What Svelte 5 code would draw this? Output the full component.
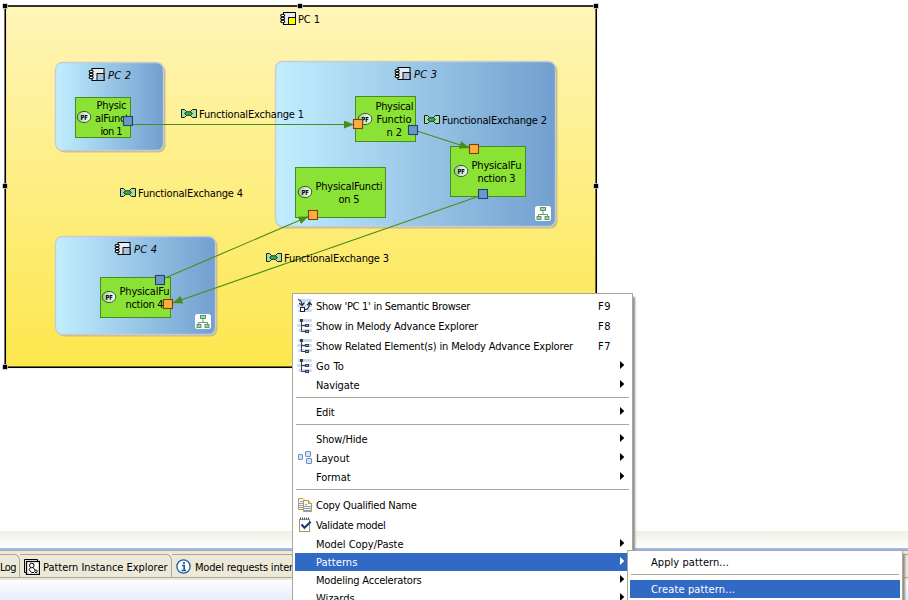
<script>
  const containers = [
    { name: 'PC 2', x: 55.5, y: 62.5, w: 108, h: 88, ix: 88.5, tx: 108, ty: 79, grad: 'gBlue' },
    { name: 'PC 3', x: 275.5, y: 61.5, w: 280, h: 165, ix: 394.5, tx: 414, ty: 78, grad: 'gBlue', sub: [535, 206] },
    { name: 'PC 4', x: 55.5, y: 236.5, w: 160, h: 98, ix: 114.5, tx: 134, ty: 253, grad: 'gBlue', sub: [195, 314] }
  ];
  const functions = [
    { x: 75.5, y: 97.5, w: 55, h: 40, px: 84, py: 117, lines: [['Physic', 96.5, 109, 30], ['alFunct', 95, 122, 34], ['ion 1', 100.5, 135, 22]] },
    { x: 355.5, y: 96.5, w: 60, h: 45, px: 365, py: 119, lines: [['Physical', 375.5, 110, 38], ['Functio', 376.5, 123, 35], ['n 2', 386.5, 136, 15.5]] },
    { x: 450.5, y: 146.5, w: 75, h: 50, px: 461, py: 171, lines: [['PhysicalFu', 471.5, 169, 50], ['nction 3', 477.5, 182, 38]] },
    { x: 295.5, y: 167.5, w: 90, h: 50, px: 305, py: 192, lines: [['PhysicalFuncti', 315.5, 190, 67], ['on 5', 338.5, 203, 21]] },
    { x: 100.5, y: 277.5, w: 70, h: 40, px: 109, py: 297, lines: [['PhysicalFu', 119.5, 295, 50], ['nction 4', 125.5, 308, 38]] }
  ];
  const blue = '#6b98cc';
  const orange = '#fcaf3e';
  const ports = [
    [123, 116, blue], [353, 119, orange], [408, 125, blue], [469, 144, orange],
    [478, 189, blue], [308, 210, orange], [155, 275, blue], [163, 299, orange]
  ];
  const edges = [
    [132, 124.5, 354, 124.5], [417, 131, 469.5, 148], [165, 278, 308.5, 216.5], [478, 196.5, 172.5, 303]
  ];
  const exchanges = [
    ['FunctionalExchange 1', 181, 108, 199, 118],
    ['FunctionalExchange 2', 424, 114, 442, 124],
    ['FunctionalExchange 3', 266, 252, 284, 262],
    ['FunctionalExchange 4', 120, 187, 138, 197]
  ];
  const handles = [[3, 4], [298, 4], [594, 4], [3, 184], [594, 184], [3, 365]];

  const menu = [
    { t: "Show 'PC 1' in Semantic Browser", w: 154, key: 'F9', icon: 'semantic' },
    { t: 'Show in Melody Advance Explorer', w: 162, key: 'F8', icon: 'tree' },
    { t: 'Show Related Element(s) in Melody Advance Explorer', w: 257, key: 'F7', icon: 'tree' },
    { t: 'Go To', w: 28, sub: true, icon: 'tree' },
    { t: 'Navigate', w: 43.5, sub: true },
    null,
    { t: 'Edit', w: 18.5, sub: true },
    null,
    { t: 'Show/Hide', w: 51.5, sub: true },
    { t: 'Layout', w: 33.5, sub: true, icon: 'layout' },
    { t: 'Format', w: 34.5, sub: true },
    null,
    { t: 'Copy Qualified Name', w: 100.5, icon: 'copy' },
    { t: 'Validate model', w: 69.5, icon: 'validate' },
    { t: 'Model Copy/Paste', w: 87.5, sub: true },
    { t: 'Patterns', w: 41.5, sub: true, active: true },
    { t: 'Modeling Accelerators', w: 105.5, sub: true },
    { t: 'Wizards', w: 38.5, sub: true }
  ];
  const submenu = [{ t: 'Apply pattern...', w: 78 }, null, { t: 'Create pattern...', w: 84, active: true }];

  // Spreads the glyphs of a label over a given width.
  function fit(node, width) {
    const natural = node.getBoundingClientRect().width;
    node.style.letterSpacing = `${(width - natural) / node.textContent.length}px`;
  }
</script>

{#snippet componentIcon(x, y, fill)}
  <g transform="translate({x} {y})">
    <rect x="3.5" y=".5" width="12" height="12" fill="#e6ebf3" stroke="#000" />
    <rect x="8.5" y="5.5" width="7" height="7" {fill} stroke="#111" />
    <g fill="#fff" stroke="#000" stroke-width="1.1">
      <ellipse cx="2.7" cy="3.5" rx="2" ry="1.2" />
      <ellipse cx="2.7" cy="6.5" rx="2" ry="1.2" />
      <ellipse cx="2.7" cy="9.5" rx="2" ry="1.2" />
    </g>
  </g>
{/snippet}

{#snippet arrow()}
  <svg class="arrow" width="5" height="8" viewBox="0 0 5 8"><path d="M0 0L4.3 4L0 8Z" fill="currentColor" /></svg>
{/snippet}

{#snippet menuIcon(kind)}
  <svg width="16" height="16" viewBox="0 0 16 16">
    {#if kind === 'tree' || kind === 'semantic'}
      <g fill="#c9daf3">
        <rect x="1" y="1" width="14" height="3" rx="1.5" />
        <rect x="0" y="6" width="15" height="3" rx="1.5" />
        <rect x="1" y="11" width="14" height="3" rx="1.5" />
      </g>
    {/if}
    {#if kind === 'tree'}
      <path d="M4.5 3V13.5H10M4.5 7.5H10" fill="none" stroke="#3c3f48" />
      <g fill="#3c3f48">
        <rect x="3" y="1" width="3" height="3" />
        <rect x="8" y="6" width="4" height="3" />
        <rect x="8" y="12" width="4" height="3" />
      </g>
      <rect x="9" y="7" width="2" height="1" fill="#8fa3c6" /><rect x="9" y="13" width="2" height="1" fill="#8fa3c6" />
    {:else if kind === 'semantic'}
      <path d="M1 1.500C4 2 5 4 5 7M2.300 5L5 7.500L7.500 4.500M8 11.5C11.5 11.5 12.5 9 12.5 5M10.3 7L12.5 4.300L14.700 7" fill="none" stroke="#222a34" stroke-width="1.2" />
      <rect x="3.5" y="9.5" width="4" height="4" fill="#fff" stroke="#222" />
    {:else if kind === 'layout'}
      <g fill="#d5e5f8" stroke="#6c8fc2">
        <rect x="1.5" y="4.5" width="4" height="5" rx=".5" />
        <rect x="8.5" y="1.5" width="5" height="5" rx=".5" />
        <rect x="9.5" y="8.5" width="5" height="5" rx=".5" />
      </g>
    {:else if kind === 'copy'}
      <path d="M1.5 1.5H6L8.5 4V12.5H1.5Z" fill="#fbf7e4" stroke="#b39a55" />
      <path d="M6.500 3.500H11.500L14.500 6.500V14.500H6.500Z" fill="#fbf7e4" stroke="#b39a55" />
      <path d="M11.500 3.500V6.500H14.500" fill="#e8d48b" stroke="#b39a55" />
      <path d="M3 4.500H6M1 6.500H6M1 8.500H6M1 10.500H6M8 7.500H10M7 9.500H14M7 11.500H14M7 13.500H14" stroke="#7f9fd6" />
    {:else if kind === 'validate'}
      <rect x="2.500" y="2.500" width="10" height="12" fill="#fff" stroke="#ad955c" />
      <path d="M3 1.500H13" stroke="#2e517c" stroke-width="2" stroke-dasharray="1 1" />
      <path d="M4.500 7.500L7.500 10.700L13.700 4.800" fill="none" stroke="#173f7c" stroke-width="2.200" />
    {/if}
  </svg>
{/snippet}

<div class="window">
  <div class="canvas">
    <svg width="908" height="531" viewBox="0 0 908 531">
      <defs>
        <linearGradient id="gYellow" x1="0" y1="0" x2="0" y2="1">
          <stop offset="0" stop-color="#fff5b8" /><stop offset="1" stop-color="#fce74c" />
        </linearGradient>
        <linearGradient id="gBlue"><stop offset="0" stop-color="#c1efff" /><stop offset="1" stop-color="#729fcf" /></linearGradient>
        <linearGradient id="gGreen"><stop offset="0" stop-color="#8fca8a" /><stop offset=".7" stop-color="#e6f3e5" /><stop offset="1" stop-color="#fff" /></linearGradient>
        <marker id="tip" markerUnits="userSpaceOnUse" viewBox="0 0 10 8" refX="10" refY="4" markerWidth="10" markerHeight="8" orient="auto">
          <path d="M0 0L10 4L0 8Z" fill="#4a8c1c" />
        </marker>
      </defs>

      <rect x="5.250" y="6" width="591" height="361.250" fill="url(#gYellow)" stroke="#000" stroke-width="1.600" />
      {#each handles as [x, y]}
        <rect x={x - 0.5} y={y - 0.5} width="5" height="5" fill="#000" stroke="#fff" stroke-width=".6" />
      {/each}
      {@render componentIcon(280, 12, '#ffff00')}
      <text x="298" y="23" textLength="22">PC 1</text>

      {#each containers as c}
        <rect x={c.x + 2} y={c.y + 2} width={c.w} height={c.h} rx="7" fill="#ccbd83" />
        <rect x={c.x} y={c.y} width={c.w} height={c.h} rx="7" fill="url(#{c.grad})" stroke="#c5ccd4" stroke-width="1.400" />
        {@render componentIcon(c.ix, c.ty - 11, '#a9c2e2')}
        <text class="italic" x={c.tx} y={c.ty} textLength="23">{c.name}</text>
        {#if c.sub}
          <g transform="translate({c.sub[0]} {c.sub[1]})">
            <rect x="0" y="0" width="16" height="15" rx="2.500" fill="#fff" />
            <path d="M8 5V8M3.500 11V8.500H12.500V11" fill="none" stroke="#6d9a76" />
            <g fill="#9fd3a5" stroke="#4f9160" stroke-width=".9">
              <rect x="5.500" y="1.500" width="5" height="3" />
              <rect x="2" y="10.500" width="4" height="3" />
              <rect x="10" y="10.500" width="4" height="3" />
            </g>
          </g>
        {/if}
      {/each}

      {#each functions as f}
        <rect x={f.x} y={f.y} width={f.w} height={f.h} fill="#8ae234" stroke="#4a8a22" />
        <ellipse cx={f.px} cy={f.py} rx="6.800" ry="5.600" fill="url(#gGreen)" stroke="#365c38" stroke-width="1" />
        <text class="pf" x={f.px - 3.6} y={f.py + 2.700} textLength="7.400" lengthAdjust="spacingAndGlyphs">PF</text>
        {#each f.lines as [t, x, y, w]}
          <text {x} {y} textLength={w}>{t}</text>
        {/each}
      {/each}

      {#each edges as [x1, y1, x2, y2]}
        <line {x1} {y1} {x2} {y2} stroke="#4a8c1c" stroke-width="1.100" marker-end="url(#tip)" />
      {/each}
      {#each ports as [x, y, fill]}
        <rect x={x + 0.5} y={y + 0.5} width="9" height="9" {fill} stroke={fill === blue ? '#24446f' : '#803f0c'} stroke-width="1.100" />
      {/each}

      {#each exchanges as [t, ix, iy, tx, ty]}
        <g transform="translate({ix} {iy})">
          <path d="M.5 1.500H3.500L5.500 3.500V7.500L3.500 9.500H.5Z" fill="#a9dcae" stroke="#0b2514" />
          <path d="M15.500 1.500H11.500L9.500 3.500V7.500L11.500 9.500H15.500Z" fill="#a9dcae" stroke="#0b2514" />
          <path d="M5.500 3.800H9.500L11.500 5.500L9.500 7.300H5.500L3.500 5.500Z" fill="#43ab57" stroke="#123c20" />
        </g>
        <text x={tx} y={ty} textLength="105">{t}</text>
      {/each}
    </svg>
  </div>

  <div class="sash"></div>
  <div class="tabs">
    <div class="tab log"><span use:fit={16}>Log</span></div>
    <div class="tab pattern">
      <svg width="16" height="16" viewBox="0 0 16 16">
        <path d="M2.500 13.500H.5V.5H13.500V2" fill="#fff" stroke="#000" />
        <rect x="2.500" y="2.500" width="13" height="13" fill="#fff" stroke="#000" stroke-width="1.300" />
        <g fill="none" stroke="#000">
          <circle cx="7.800" cy="6.500" r="2.300" />
          <path d="M6.500 8.500L5 10.500L7.500 13.500H10M9 8.500L11 11" />
          <circle cx="12" cy="12.300" r="1.300" />
        </g>
      </svg>
      <span use:fit={124.5}>Pattern Instance Explorer</span>
    </div>
    <div class="tab info">
      <svg width="15" height="15" viewBox="0 0 15 15">
        <circle cx="7.500" cy="7.500" r="6.600" fill="#fff" stroke="#1f5f9f" stroke-width="1.300" />
        <path d="M6 6.500H8.200V11M5.500 11.500H10M8 3V5" fill="none" stroke="#1d5c9c" stroke-width="1.700" />
      </svg>
      <span use:fit={127}>Model requests interpreter</span>
    </div>
  </div>
  <div class="view"></div>

  <div class="menu main">
    {#each menu as m}
      {#if m}
        <div class="item" class:tall={m.icon} class:active={m.active}>
          <span class="icon">{#if m.icon}{@render menuIcon(m.icon)}{/if}</span>
          <span class="label" use:fit={m.w}>{m.t}</span>
          <span class="grow"></span>
          {#if m.key}<span class="key label"><span use:fit={13}>{m.key}</span></span>{/if}
          {#if m.sub}{@render arrow()}{/if}
        </div>
      {:else}
        <div class="sep"></div>
      {/if}
    {/each}
  </div>

  <div class="menu second">
    {#each submenu as m}
      {#if m}
        <div class="item" class:active={m.active}>
          <span class="icon"></span>
          <span class="label" use:fit={m.w}>{m.t}</span>
        </div>
      {:else}
        <div class="sep"></div>
      {/if}
    {/each}
  </div>
</div>

<style>
  :global(body) {
    margin: 0;
    background: #fff;
  }
  .window {
    position: relative;
    display: flex;
    flex-direction: column;
    width: 908px;
    height: 600px;
    overflow: hidden;
    background: #fff;
    color: #000;
    font: 11px/14px 'DejaVu Sans Condensed', 'DejaVu Sans', sans-serif;
    font-stretch: condensed;
    white-space: pre;
  }
  .canvas {
    height: 531px;
  }
  svg {
    display: block;
    flex: none;
  }
  text {
    fill: #000;
  }
  .italic {
    font-style: italic;
  }
  .pf {
    font-size: 7px;
    font-weight: bold;
  }
  .sash {
    height: 17px;
    background: linear-gradient(#f0efe6, #fefefc);
    border-bottom: 2px solid #9ebaec;
  }
  .tabs {
    display: flex;
    box-sizing: border-box;
    height: 30px;
    padding-top: 3px;
    padding-bottom: 2px;
    border-top: 1px solid #aca899;
    background: #ece9d8;
  }
  .tab {
    display: flex;
    align-items: center;
    box-sizing: border-box;
    height: 24px;
    border-top: 1px solid #aca899;
    border-bottom: 1px solid #aca899;
    padding-top: 1px;
  }
  .tab span {
    padding-top: 2px;
  }
  .log,
  .pattern {
    border-right: 1px solid #aca899;
    border-top-right-radius: 6px;
  }
  .log {
    width: 20px;
  }
  .pattern {
    width: 152px;
    padding-left: 4px;
    gap: 3px;
  }
  .info {
    flex: 1;
    padding-left: 4px;
    gap: 4px;
  }
  .view {
    flex: 1;
    background: linear-gradient(#fcfdff, #e6eefc);
  }
  .menu {
    position: absolute;
    box-sizing: border-box;
    padding: 2px;
    border: 1px solid #aca899;
    background: #fff;
    box-shadow: 3px 3px 2px -1px #8b8b88;
  }
  .main {
    left: 292px;
    top: 293px;
    width: 341px;
  }
  .second {
    left: 627px;
    top: 550px;
    width: 276px;
  }
  .item {
    display: flex;
    align-items: center;
    height: 18px;
  }
  .tall {
    height: 20px;
  }
  .active {
    background: #316ac5;
    color: #fff;
  }
  .icon {
    width: 16px;
    margin: 0 3px 0 2px;
  }
  .label {
    padding-top: 2px;
  }
  .grow {
    flex: 1;
  }
  .key {
    width: 32px;
  }
  .arrow {
    margin: 0 5px 2px 0;
  }
  .sep {
    height: 1px;
    margin: 3px 1px 5px;
    background: #aca899;
  }
</style>
